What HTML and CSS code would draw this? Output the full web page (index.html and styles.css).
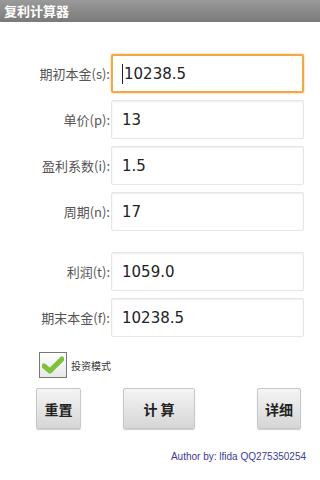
FILE: index.html
```html
<!DOCTYPE html>
<html lang="zh">
<head>
    <meta charset="UTF-8">
    <meta name="viewport" content="width=device-width, initial-scale=1.0">
    <title>复利计算器</title>
    <link rel="stylesheet" href="styles.css">
</head>
<body>

    <div class="titlebar">复利计算器</div>

    <div class="form">
        <div class="group">
            <div class="row">
                <label class="label">期初本金(s):</label>
                <div class="field focused"><span class="caret"></span>10238.5</div>
            </div>
            <div class="row">
                <label class="label">单价(p):</label>
                <div class="field">13</div>
            </div>
            <div class="row">
                <label class="label">盈利系数(i):</label>
                <div class="field">1.5</div>
            </div>
            <div class="row">
                <label class="label">周期(n):</label>
                <div class="field">17</div>
            </div>
        </div>

        <div class="group results">
            <div class="row">
                <label class="label">利润(t):</label>
                <div class="field">1059.0</div>
            </div>
            <div class="row">
                <label class="label">期末本金(f):</label>
                <div class="field">10238.5</div>
            </div>
        </div>

        <div class="check-row">
            <span class="checkbox">
                <svg width="22" height="20" viewBox="0 0 22 20">
                    <path d="M2 11 L8 16 L20 4" fill="none" stroke="#7cc23a" stroke-width="5" stroke-linecap="round" stroke-linejoin="round"/>
                </svg>
            </span>
            <span class="check-label">投资模式</span>
        </div>

        <div class="buttons">
            <button class="btn btn-reset">重置</button>
            <button class="btn btn-calc">计 算</button>
            <button class="btn btn-detail">详细</button>
        </div>

        <p class="author">Author by: lfida QQ275350254</p>
    </div>

</body>
</html>
```

FILE: styles.css
```css
body {
    margin: 0;
    background-color: #fff;
    font-family: 'Noto Sans CJK SC', 'DejaVu Sans', sans-serif;
    color: #333;
    width: 320px;
    height: 480px;
    overflow: hidden;
}

.titlebar {
    height: 22px;
    line-height: 22px;
    padding-left: 4px;
    background: linear-gradient(to bottom, #9a9a9a, #7a7a7a);
    color: #fff;
    font-size: 13px;
    font-weight: bold;
}

.form {
    padding-top: 32px;
}

.group {
    display: flex;
    flex-direction: column;
    gap: 7px;
}

.results {
    margin-top: 21px;
}

.row {
    display: flex;
    align-items: center;
}

.label {
    width: 111px;
    text-align: right;
    font-size: 13px;
    color: #555;
    padding-right: 1px;
    box-sizing: border-box;
}

.field {
    width: 193px;
    height: 39px;
    box-sizing: border-box;
    border: 1px solid #e6e6e6;
    border-radius: 2px;
    box-shadow: inset 0 1px 2px rgba(0, 0, 0, 0.08);
    padding-left: 10px;
    display: flex;
    align-items: center;
    font-family: 'DejaVu Sans', sans-serif;
    font-size: 15px;
    color: #222;
}

.focused {
    border: 2px solid #f0a944;
    padding-left: 9px;
    box-shadow: 0 0 2px #e8b060;
}

.caret {
    width: 1px;
    height: 20px;
    background: #222;
    margin-right: 1px;
}

.check-row {
    display: flex;
    align-items: center;
    margin-top: 15px;
    margin-left: 39px;
}

.checkbox {
    width: 28px;
    height: 26px;
    box-sizing: border-box;
    border: 1px solid #777;
    background: linear-gradient(to bottom, #fff, #e8e8e8);
    display: flex;
    align-items: center;
    justify-content: center;
}

.check-label {
    margin-left: 4px;
    font-size: 10px;
    color: #333;
}

.buttons {
    display: flex;
    margin: 10px 19px 0 36px;
}

.btn {
    height: 41px;
    border: 1px solid #c8c8c8;
    border-radius: 2px;
    background: linear-gradient(to bottom, #f4f4f4, #d6d6d6);
    box-shadow: 0 1px 1px rgba(0, 0, 0, 0.2);
    font-family: 'Noto Sans CJK SC', sans-serif;
    font-size: 14px;
    font-weight: bold;
    color: #222;
    padding: 0;
}

.btn-reset {
    width: 45px;
}

.btn-calc {
    width: 72px;
    margin-left: 42px;
}

.btn-detail {
    width: 44px;
    margin-left: auto;
}

.author {
    margin: 22px 14px 0 0;
    text-align: right;
    font-family: 'Liberation Sans', sans-serif;
    font-size: 10px;
    color: #3c3c96;
}
```
